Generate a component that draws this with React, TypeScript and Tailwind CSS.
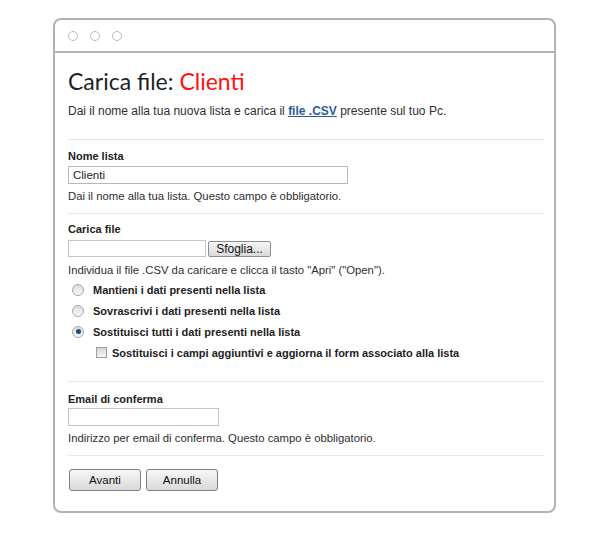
import React from "react";

const sans = { fontFamily: '"Liberation Sans", Arial, sans-serif' };

function Radio({ checked }: { checked?: boolean }) {
  return (
    <span className="flex h-[12px] w-[12px] items-center justify-center rounded-full border border-[#a9a9a9] bg-gradient-to-b from-[#dcdcdc] to-[#f8f8f8]">
      {checked && <span className="h-[5px] w-[5px] rounded-full bg-[#24498a]" />}
    </span>
  );
}

function Separator() {
  return <div className="h-px bg-[#e8e8e8]" />;
}

export default function App() {
  const options = [
    { label: "Mantieni i dati presenti nella lista", checked: false },
    { label: "Sovrascrivi i dati presenti nella lista", checked: false },
    { label: "Sostituisci tutti i dati presenti nella lista", checked: true },
  ];

  return (
    <div className="min-h-[533px] bg-white pt-[18px] pl-[53px]" style={sans}>
      <div className="w-[503px] rounded-[8px] border-2 border-[#b3b3b3] bg-white">
        {/* Title bar */}
        <div className="flex h-[33px] items-center gap-[12px] border-b-2 border-[#b3b3b3] pl-[13px]">
          <span className="h-[10px] w-[10px] rounded-full border border-[#bdbdbd]" />
          <span className="h-[10px] w-[10px] rounded-full border border-[#bdbdbd]" />
          <span className="h-[10px] w-[10px] rounded-full border border-[#bdbdbd]" />
        </div>

        <div className="pl-[13px] pr-[10px] pt-[13px] pb-[20px] text-[11.3px] leading-[14px] text-[#2e2e2e]">
          <h1
            className="h-[30px] text-[23px] leading-[30px] text-[#1c1f2a]"
            style={{ fontFamily: '"Lato", "Open Sans", sans-serif' }}
          >
            Carica file: <span className="text-[#ff1010]">Clienti</span>
          </h1>
          <p className="mt-[8px] text-[12px]">
            Dai il nome alla tua nuova lista e carica il{" "}
            <a href="#" className="font-bold text-[#2d5b9c] underline">
              file .CSV
            </a>{" "}
            presente sul tuo Pc.
          </p>
          <div className="mt-[21px]">
            <Separator />
          </div>

          {/* Nome lista */}
          <div className="mt-[9px] text-[11px] font-bold text-[#222]">Nome lista</div>
          <input
            defaultValue="Clienti"
            className="mt-[3px] block h-[18px] w-[280px] border border-[#b7b7b7] px-[4px] text-[11.5px] text-[#222] outline-none"
          />
          <div className="mt-[5px]">Dai il nome alla tua lista. Questo campo è obbligatorio.</div>
          <div className="mt-[10px]">
            <Separator />
          </div>

          {/* Carica file */}
          <div className="mt-[8px] text-[11px] font-bold text-[#222]">Carica file</div>
          <div className="mt-[4px] flex h-[17px] items-center">
            <div className="h-[17px] w-[138px] border border-[#c4c4c4]" />
            <button className="ml-[2px] h-[16px] w-[63px] rounded-[2px] border border-[#8e8e8e] bg-gradient-to-b from-[#f6f6f6] to-[#dadada] text-[12px] leading-[14px] text-[#111]">
              Sfoglia...
            </button>
          </div>
          <div className="mt-[6px]">
            Individua il file .CSV da caricare e clicca il tasto "Apri" ("Open").
          </div>

          <div className="mt-[2px]">
            {options.map((o) => (
              <div key={o.label} className="flex h-[21px] items-center pl-[4px]">
                <Radio checked={o.checked} />
                <span className="ml-[9px] text-[11px] font-bold text-[#222]">{o.label}</span>
              </div>
            ))}
            <div className="flex h-[21px] items-center pl-[28px]">
              <span className="h-[11px] w-[11px] border border-[#9d9d9d] bg-gradient-to-b from-[#d8d8d8] to-[#f4f4f4]" />
              <span className="ml-[5px] text-[11px] font-bold text-[#222]">
                Sostituisci i campi aggiuntivi e aggiorna il form associato alla lista
              </span>
            </div>
          </div>
          <div className="mt-[18px]">
            <Separator />
          </div>

          {/* Email */}
          <div className="mt-[10px] text-[11px] font-bold text-[#222]">Email di conferma</div>
          <input className="mt-[2px] block h-[18px] w-[151px] border border-[#c4c4c4] outline-none" />
          <div className="mt-[5px]">Indirizzo per email di conferma. Questo campo è obbligatorio.</div>
          <div className="mt-[10px]">
            <Separator />
          </div>

          <div className="mt-[13px] flex gap-[5px] pl-[1px]">
            <button className="h-[22px] w-[72px] rounded-[3px] border border-[#7e7e7e] bg-gradient-to-b from-[#f7f7f7] to-[#d9d9d9] text-[11.5px] text-[#111]">
              Avanti
            </button>
            <button className="h-[22px] w-[72px] rounded-[3px] border border-[#7e7e7e] bg-gradient-to-b from-[#f7f7f7] to-[#d9d9d9] text-[11.5px] text-[#111]">
              Annulla
            </button>
          </div>
        </div>
      </div>
    </div>
  );
}
